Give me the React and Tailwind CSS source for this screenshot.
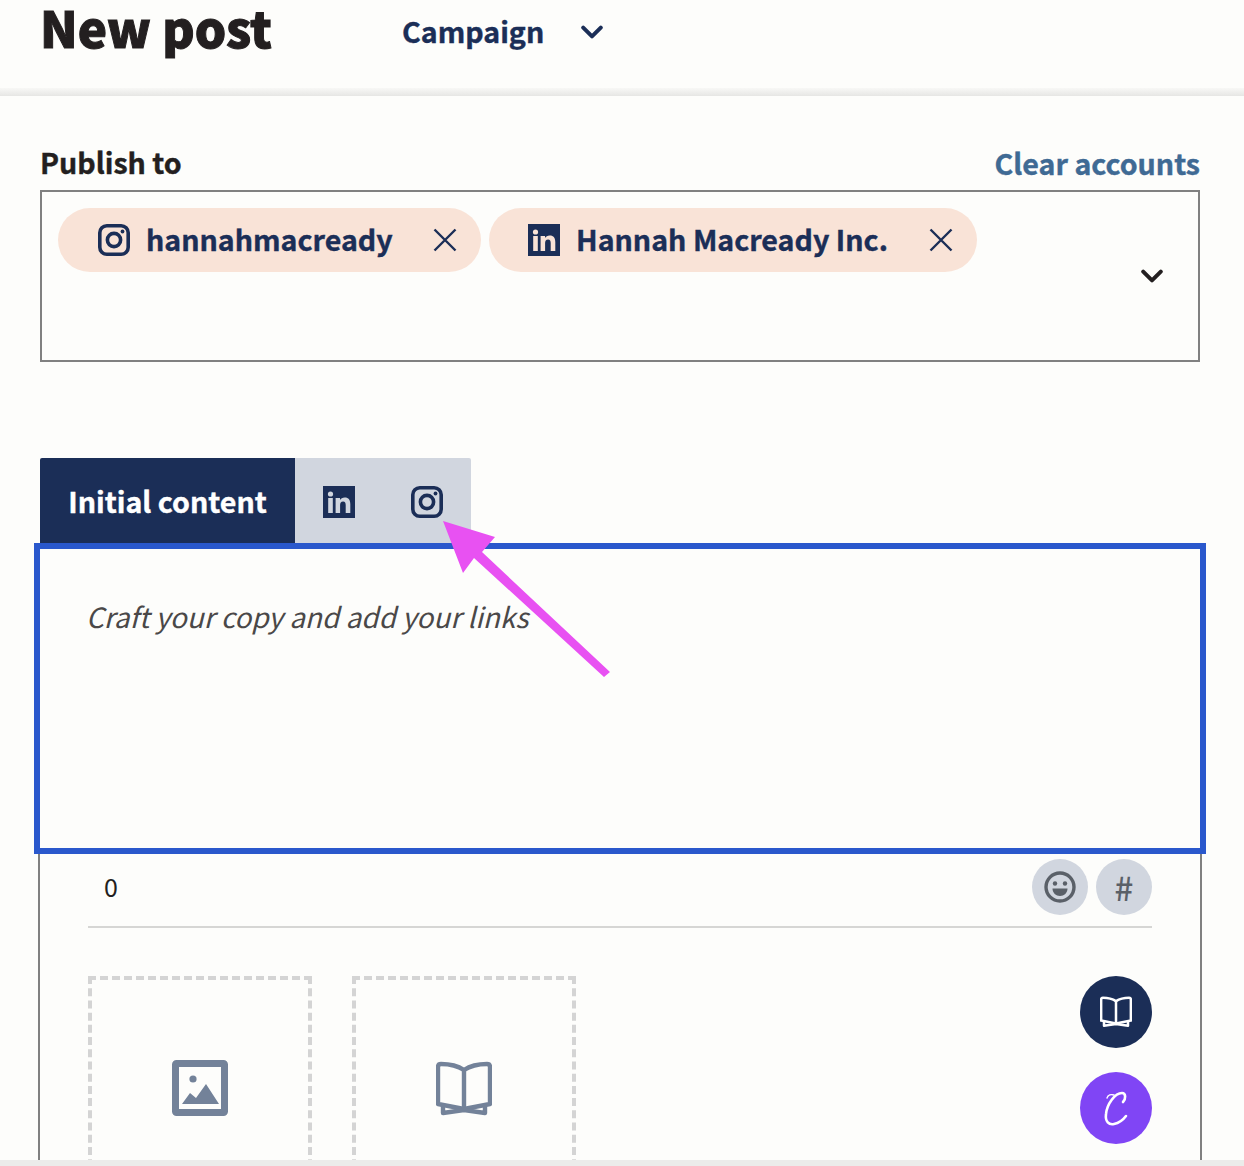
import { useState } from 'react';

const Chevron = ({ className, width = 3.6 }) => (
  <svg viewBox="0 0 20 12" className={className} fill="none" stroke="currentColor" strokeWidth={width} strokeLinecap="round" strokeLinejoin="round">
    <path d="M2 2l8 8 8-8" />
  </svg>
);

const Close = () => (
  <svg viewBox="0 0 24 24" className="w-6 h-6 text-[#1b2e57]" fill="none" stroke="currentColor" strokeWidth="2.4">
    <path d="M1.5 1.5l21 21M22.5 1.5l-21 21" />
  </svg>
);

const InstagramIcon = ({ className }) => (
  <svg viewBox="0 0 32 32" className={className} fill="none">
    <rect x="1.8" y="1.8" width="28.4" height="28.4" rx="7" stroke="#1b2e57" strokeWidth="3.6" />
    <circle cx="16" cy="16" r="6.6" stroke="#1b2e57" strokeWidth="3.6" />
    <circle cx="24.5" cy="7.5" r="1.9" fill="#1b2e57" />
  </svg>
);

const LinkedinIcon = ({ className, letters = '#fdfdfc' }) => (
  <svg viewBox="0 0 32 32" className={className}>
    <rect width="32" height="32" fill="#1b2e57" />
    <g fill={letters}>
      <circle cx="7.5" cy="8" r="2.6" />
      <rect x="5.2" y="12" width="4.6" height="15" />
      <path d="M12.6 12h4.4v2.1c.9-1.5 2.5-2.5 4.7-2.5 4 0 5.6 2.6 5.6 6.6V27h-4.6v-7.8c0-2-.6-3.6-2.6-3.6-2.2 0-3 1.6-3 3.6V27h-4.5z" />
    </g>
  </svg>
);

const BookIcon = ({ className, color }) => (
  <svg viewBox="0 0 56 56" className={className} fill="none" stroke={color} strokeWidth="4.4" strokeLinejoin="round" strokeLinecap="round">
    <path d="M28 9C22 5 14 3 5 3 3 3 2 4 2 6v37l26 5 26-5V6c0-2-1-3-3-3-9 0-17 2-23 6z" />
    <path d="M28 9v39" />
    <path d="M7 45v7l21-3 21 3v-7" />
  </svg>
);

const App = () => {
  const [accounts] = useState([
    { name: 'hannahmacready', type: 'ig' },
    { name: 'Hannah Macready Inc.', type: 'li' },
  ]);

  return (
    <div className="relative w-[1244px] h-[1166px] overflow-hidden flex flex-col bg-[#fdfdfb] text-[#231f20] font-['Noto_Sans_CJK_JP','Liberation_Sans',sans-serif]">
      <header className="h-[88px] shrink-0 flex items-start pl-[40px]">
        <h1 className="text-[49.4px] leading-[54px] font-black [-webkit-text-stroke:1px_#231f20]">New post</h1>
        <div className="ml-[130px] mt-[12px] flex items-center text-[#1b2e57]">
          <span className="text-[28.6px] leading-[40px] font-bold -mt-[1px] [-webkit-text-stroke-width:0.4px]">Campaign</span>
          <Chevron className="w-[22px] h-[14px] ml-[37px] mt-[1px]" />
        </div>
      </header>
      <div className="h-[8px] shrink-0 bg-gradient-to-b from-[#f8f8f6] to-[#e6e6e4]" />

      <main className="flex-1 flex flex-col pl-[40px] pr-[44px] min-h-0">
        <div className="mt-[44px] h-[50px] shrink-0 flex items-start justify-between">
          <span className="text-[28.6px] font-bold leading-[40px] mt-[2px] [-webkit-text-stroke-width:0.4px]">Publish to</span>
          <button className="text-[#3f6a94] text-[28.6px] font-bold leading-[40px] mt-[3px] [-webkit-text-stroke-width:0.4px]">Clear accounts</button>
        </div>

        <div className="h-[172px] shrink-0 border-2 border-[#808080] flex pl-[16px] pt-[16px] pr-[35px] justify-between">
          <div className="flex gap-[8px] items-start">
            {accounts.map((a) => (
              <div
                key={a.name}
                className={
                  a.type === 'ig'
                    ? 'h-[64px] w-[423px] rounded-[32px] bg-[#f9e3d7] flex items-center pl-[40px] pr-[24px] justify-between'
                    : 'h-[64px] w-[488px] rounded-[32px] bg-[#f9e3d7] flex items-center pl-[39px] pr-[24px] justify-between'
                }
              >
                <div className="flex items-center gap-[16px]">
                  {a.type === 'ig' ? <InstagramIcon className="w-8 h-8" /> : <LinkedinIcon className="w-8 h-8" letters="#f9e3d7" />}
                  <span className="text-[28.6px] font-bold text-[#1b2e57] leading-[40px] -mt-[2px] [-webkit-text-stroke-width:0.4px]">{a.name}</span>
                </div>
                <Close />
              </div>
            ))}
          </div>
          <Chevron className="w-[22px] h-[14px] mt-[61px] text-[#231f20]" />
        </div>

        <div className="mt-[96px] h-[85px] shrink-0 w-[431px] flex">
          <div className="w-[255px] bg-[#1b2e57] text-white rounded-tl-[2px] flex items-center justify-center pt-[2px] text-[28.6px] font-bold [-webkit-text-stroke-width:0.4px]">
            Initial content
          </div>
          <div className="flex-1 bg-[#d1d6df] rounded-tr-[2px] flex items-center pl-[28px] pt-[2px] gap-[56px]">
            <LinkedinIcon className="w-8 h-8" letters="#d1d6df" />
            <InstagramIcon className="w-8 h-8" />
          </div>
        </div>

        <div className="flex-1 -mx-[2px] border-x-2 border-[#808080] min-h-0 flex flex-col">
          <div className="-mx-[6px] h-[311px] shrink-0 border-[6px] border-[#2a58cc] pl-[46px] pt-[47px] text-[#4a4848] italic text-[27.9px] leading-[40px] font-normal">
            Craft your copy and add your links
          </div>
          <div className="mx-[48px] h-[74px] shrink-0 border-b-2 border-[#d6d6d4] flex items-center justify-between pl-[16px]">
            <span className="text-[25px] text-[#231f20] -mt-[6px]">0</span>
            <div className="flex gap-[8px] -mt-[6px]">
              <div className="w-14 h-14 rounded-full bg-[#d1d6df] flex items-center justify-center">
                <svg viewBox="0 0 32 32" className="w-8 h-8" fill="none">
                  <circle cx="16" cy="16" r="14" stroke="#5a6068" strokeWidth="3.4" />
                  <circle cx="11" cy="12.5" r="2.2" fill="#5a6068" />
                  <circle cx="21" cy="12.5" r="2.2" fill="#5a6068" />
                  <path d="M8.5 17.5h15c0 4.5-3.4 7.5-7.5 7.5s-7.5-3-7.5-7.5z" fill="#5a6068" />
                </svg>
              </div>
              <div className="w-14 h-14 rounded-full bg-[#d1d6df] flex items-center justify-center text-[33px] font-medium leading-none text-[#5a6068]">
                #
              </div>
            </div>
          </div>
          <div className="mx-[48px] mt-[48px] flex justify-between items-start">
            <div className="flex gap-[40px]">
              <div className="w-[224px] h-[240px] border-[4px] border-dashed border-[#d4d4d4] flex items-start justify-center pt-[80px]">
                <svg viewBox="0 0 56 56" className="w-14 h-14">
                  <rect x="3.5" y="3.5" width="49" height="49" rx="1" fill="none" stroke="#738299" strokeWidth="7" />
                  <circle cx="21" cy="19" r="3.6" fill="#738299" />
                  <path d="M10 44l8-11 6 5 10-14 13 20z" fill="#738299" />
                </svg>
              </div>
              <div className="w-[224px] h-[240px] border-[4px] border-dashed border-[#d4d4d4] flex items-start justify-center pt-[81px]">
                <BookIcon className="w-14 h-14" color="#738299" />
              </div>
            </div>
            <div className="flex flex-col gap-[24px]">
              <div className="w-[72px] h-[72px] rounded-full bg-[#1b2e57] flex items-center justify-center">
                <BookIcon className="w-8 h-8" color="#ffffff" />
              </div>
              <div className="w-[72px] h-[72px] rounded-full bg-[#8045f5] flex items-center justify-center">
                {/* canva mark */}
                <svg viewBox="0 0 72 72" className="w-[72px] h-[72px]" fill="none" stroke="#ffffff" strokeLinecap="round">
                  <path d="M43 30c3-3 3-9-1-9-7 0-15 11-16 21-1 8 3 11 8 10 5-1 9-4 12-8" strokeWidth="2.6" />
                  <path d="M27 26c1-3 4-4 7-3" strokeWidth="1.4" />
                </svg>
              </div>
            </div>
          </div>
        </div>
      </main>

      <div className="absolute left-0 right-0 bottom-0 h-[6px] bg-[#ececea]" />

      {/* pink annotation arrow */}
      <svg className="absolute left-[440px] top-[515px] w-[180px] h-[170px]" viewBox="0 0 180 170">
        <path d="M3 6l52 16-13 15 128 120-6 5L34 43 23 58z" fill="#e851f2" />
      </svg>
    </div>
  );
};

export default App;
